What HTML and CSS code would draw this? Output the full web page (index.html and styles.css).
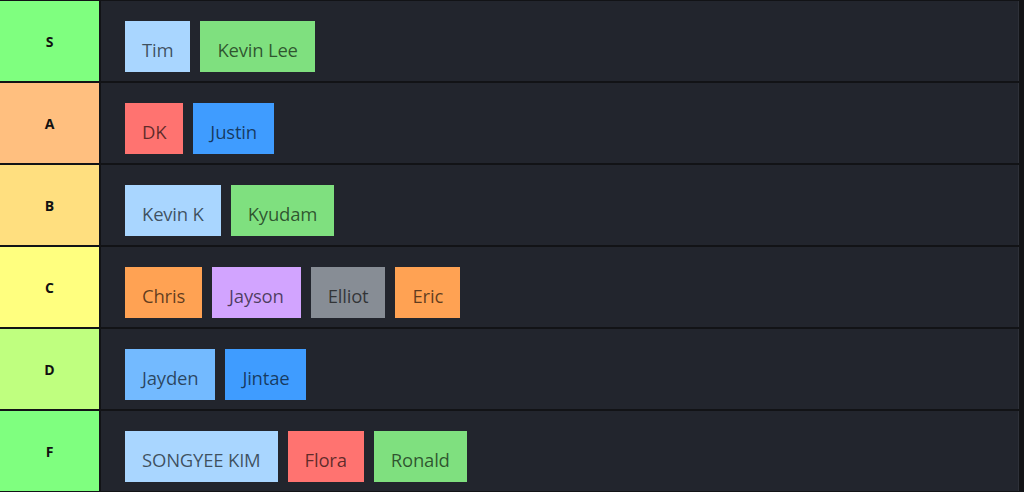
FILE: index.html
```html
<!DOCTYPE html>
<html>
<head>
<meta charset="utf-8">
<link rel="stylesheet" href="styles.css">
</head>
<body>
<div class="tiers">
  <div class="row">
    <div class="label s">S</div>
    <div class="items">
      <div class="chip lblue">Tim</div>
      <div class="chip green">Kevin Lee</div>
    </div>
  </div>
  <div class="row">
    <div class="label a">A</div>
    <div class="items">
      <div class="chip red">DK</div>
      <div class="chip blue">Justin</div>
    </div>
  </div>
  <div class="row">
    <div class="label b">B</div>
    <div class="items">
      <div class="chip lblue">Kevin K</div>
      <div class="chip green">Kyudam</div>
    </div>
  </div>
  <div class="row">
    <div class="label c">C</div>
    <div class="items">
      <div class="chip orange">Chris</div>
      <div class="chip purple">Jayson</div>
      <div class="chip grey">Elliot</div>
      <div class="chip orange">Eric</div>
    </div>
  </div>
  <div class="row">
    <div class="label d">D</div>
    <div class="items">
      <div class="chip mblue">Jayden</div>
      <div class="chip blue">Jintae</div>
    </div>
  </div>
  <div class="row">
    <div class="label f">F</div>
    <div class="items">
      <div class="chip lblue">SONGYEE KIM</div>
      <div class="chip red">Flora</div>
      <div class="chip green">Ronald</div>
    </div>
  </div>
</div>
</body>
</html>
```
FILE: styles.css
```css
html, body {
  margin: 0;
  padding: 0;
  background: #121316;
}
.tiers {
  width: 1024px;
  height: 492px;
  box-sizing: border-box;
  padding: 1px 0 1px 0;
  display: flex;
  flex-direction: column;
  gap: 2px;
}
.row {
  height: 80px;
  display: grid;
  grid-template-columns: 99px 1fr;
  column-gap: 2px;
}
.label {
  display: flex;
  align-items: center;
  justify-content: center;
  font-family: "Open Sans", "Noto Sans", sans-serif;
  font-weight: 700;
  font-size: 14px;
  color: #111;
}
.s { background: #7fff7f; }
.a { background: #ffbf7f; }
.b { background: #ffdf7f; }
.c { background: #ffff7f; }
.d { background: #bfff7f; }
.f { background: #7fff7f; }
.items {
  background: #22252d;
  border-right: 1px solid #2e3139;
  margin-right: 5px;
  padding: 20px 0 0 24px;
  display: flex;
  align-items: flex-start;
  gap: 10px;
}
.chip {
  height: 51px;
  box-sizing: border-box;
  padding: 8px 17px 0 17px;
  line-height: 42px;
  font-family: "Open Sans", "Noto Sans", sans-serif;
  font-size: 18.5px;
  letter-spacing: -0.2px;
  color: rgba(0, 0, 0, 0.64);
  white-space: nowrap;
}
.lblue { background: #a9d6ff; }
.green { background: #7fe07f; }
.red { background: #ff7370; }
.blue { background: #3f9cff; }
.mblue { background: #73baff; }
.orange { background: #ffa253; }
.purple { background: #d2a4ff; }
.grey { background: #878d95; }
```
